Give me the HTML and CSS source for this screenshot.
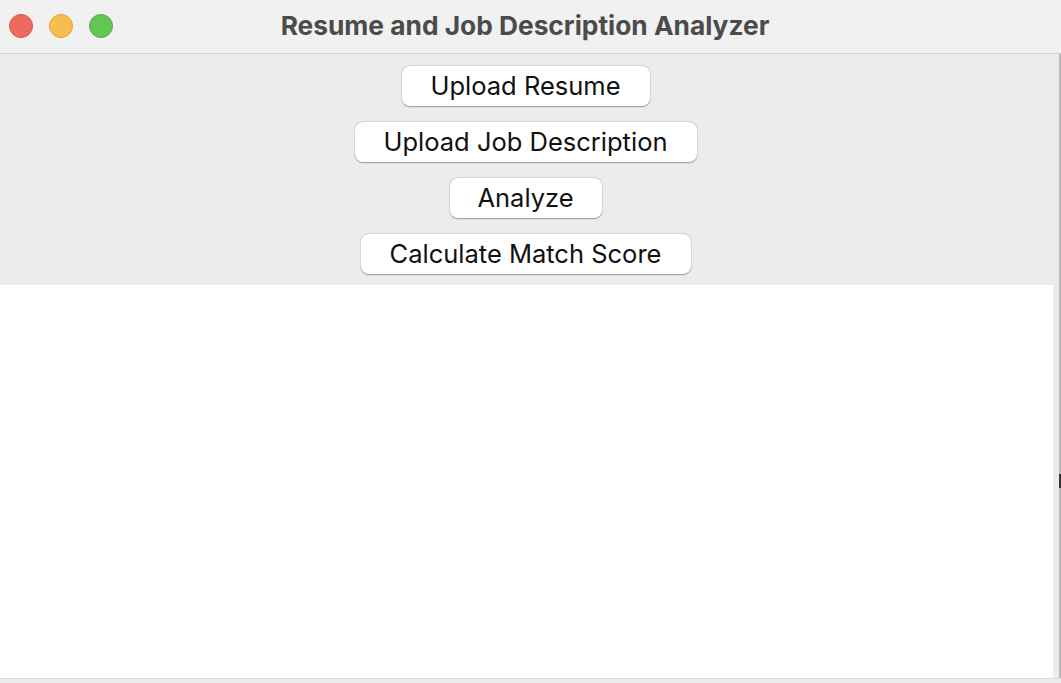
FILE: index.html
```html
<!DOCTYPE html>
<html>
<head>
<meta charset="utf-8">
<link rel="stylesheet" href="styles.css">
</head>
<body>
<div class="window">
  <div class="titlebar">
    <div class="lights">
      <span class="light red"></span>
      <span class="light yellow"></span>
      <span class="light green"></span>
    </div>
    <div class="title">Resume and Job Description Analyzer</div>
  </div>
  <div class="main-row">
    <div class="main-col">
      <div class="toolbar">
        <button class="btn btn-resume">Upload Resume</button>
        <button class="btn btn-job">Upload Job Description</button>
        <button class="btn btn-analyze">Analyze</button>
        <button class="btn btn-score">Calculate Match Score</button>
      </div>
      <div class="output"></div>
    </div>
    <div class="side-strip"></div>
    <div class="edge"><span class="grip"></span></div>
  </div>
  <div class="bottom-strip"></div>
</div>
</body>
</html>
```

FILE: styles.css
```css
html, body {
  margin: 0;
  padding: 0;
  width: 1061px;
  height: 683px;
  overflow: hidden;
  background: #ffffff;
  font-family: "Inter", "Liberation Sans", sans-serif;
}

.window {
  width: 1061px;
  height: 683px;
  display: flex;
  flex-direction: column;
}

.titlebar {
  position: relative;
  height: 53px;
  background: #f1f1f1;
  border-bottom: 1px solid #d2d2d2;
  display: flex;
  align-items: center;
  justify-content: center;
  padding-right: 11px;
  flex-shrink: 0;
}

.lights {
  position: absolute;
  left: 9px;
  top: 14px;
  display: flex;
  gap: 16px;
}

.light {
  width: 24px;
  height: 24px;
  border-radius: 50%;
  box-sizing: border-box;
}

.red { background: #ee6a5f; border: 1px solid #d9554b; }
.yellow { background: #f5be4f; border: 1px solid #dea43a; }
.green { background: #62c554; border: 1px solid #50ad42; }

.title {
  font-size: 26.3px;
  font-weight: 700;
  color: #4b4b4b;
  margin-top: -3px;
}

.main-row {
  flex: 1;
  display: flex;
  min-height: 0;
}

.main-col {
  flex: 1;
  display: flex;
  flex-direction: column;
}

.toolbar {
  background: #ececec;
  display: flex;
  flex-direction: column;
  align-items: center;
  gap: 16px;
  padding: 12px 2px 11px 0;
  flex-shrink: 0;
}

.btn {
  height: 40px;
  box-sizing: border-box;
  background: #ffffff;
  border: none;
  border-radius: 8px;
  box-shadow: 0 0.5px 1.5px rgba(0, 0, 0, 0.35), 0 0 0 0.5px rgba(0, 0, 0, 0.06);
  font-family: "Inter", "Liberation Sans", sans-serif;
  font-size: 25.5px;
  color: #111111;
  padding: 0;
  line-height: 40px;
}

.btn-resume { width: 248px; }
.btn-job { width: 342px; }
.btn-analyze { width: 152px; }
.btn-score { width: 330px; }

.output {
  flex: 1;
  background: #ffffff;
  border-bottom-right-radius: 6px;
}

.side-strip {
  width: 6px;
  background: #ececec;
}

.edge {
  position: relative;
  width: 2px;
  background: #b8b8b8;
}

.grip {
  position: absolute;
  left: 0;
  top: 420px;
  width: 2px;
  height: 14px;
  background: #333333;
}

.bottom-strip {
  height: 4px;
  background: #ececec;
  border-top: 1px solid #dcdcdc;
  flex-shrink: 0;
}
```
